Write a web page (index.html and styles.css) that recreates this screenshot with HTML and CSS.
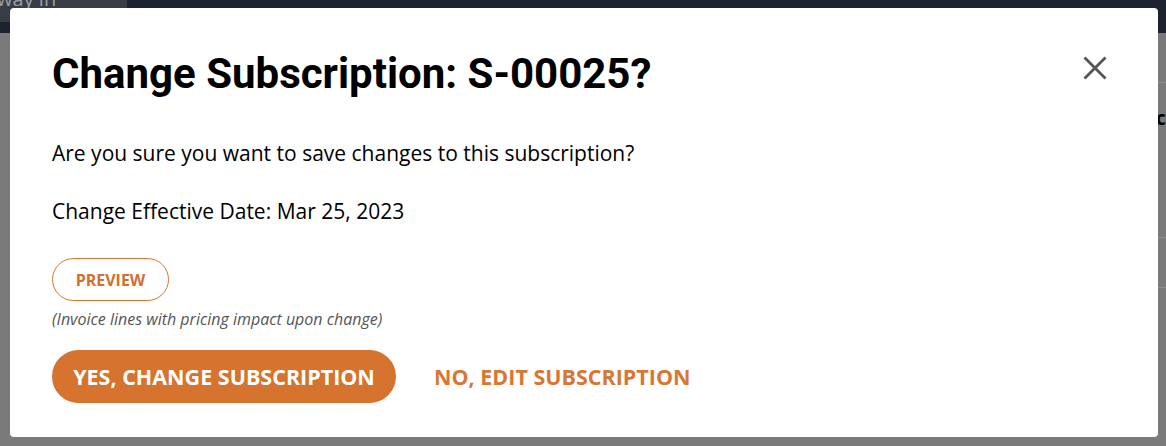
FILE: index.html
```html
<!DOCTYPE html>
<html lang="en">
<head>
<meta charset="utf-8">
<title>Change Subscription</title>
<link rel="stylesheet" href="styles.css">
</head>
<body>
<div class="page">
  <header class="topbar">
    <div class="tab"><span class="tab-text">Gateway in</span></div>
  </header>
  <div class="content">
    <div class="row-line first"></div>
    <div class="row-text">cost</div>
    <div class="row-line second"></div>
    <div class="row-line third"></div>
  </div>
</div>

<div class="modal" role="dialog" aria-labelledby="modal-title">
  <div class="modal-head">
    <h1 id="modal-title" class="modal-title">Change Subscription: S-00025?</h1>
    <button class="close-btn" aria-label="Close">
      <svg width="24" height="24" viewBox="0 0 24 24" aria-hidden="true">
        <path d="M1.5 1.5 L22.5 22.5 M22.5 1.5 L1.5 22.5" stroke="#555" stroke-width="2.8" stroke-linecap="butt" fill="none"/>
      </svg>
    </button>
  </div>
  <p class="modal-text q">Are you sure you want to save changes to this subscription?</p>
  <p class="modal-text date">Change Effective Date: Mar 25, 2023</p>
  <button class="btn-outline">PREVIEW</button>
  <p class="caption">(Invoice lines with pricing impact upon change)</p>
  <div class="actions">
    <button class="btn-primary">YES, CHANGE SUBSCRIPTION</button>
    <button class="btn-link">NO, EDIT SUBSCRIPTION</button>
  </div>
</div>
</body>
</html>
```
FILE: styles.css
```css
* { box-sizing: border-box; }
html, body { margin: 0; padding: 0; }
body {
  width: 1166px;
  height: 446px;
  overflow: hidden;
  background: #7a7a7a;
  font-family: "Open Sans", "Noto Sans", sans-serif;
  position: relative;
}
.page { width: 100%; height: 100%; overflow: hidden; }
.topbar {
  height: 33px;
  background: #1d2230;
  display: flex;
  align-items: flex-start;
}
.tab {
  width: 127px;
  height: 22px;
  background: #383c44;
  overflow: hidden;
  display: flex;
  align-items: flex-end;
}
.tab-text {
  color: #9a9ea6;
  font-size: 20px;
  line-height: 20px;
  margin-left: -47px;
  margin-bottom: 13px;
  white-space: nowrap;
}
.content { height: 413px; overflow: hidden; }
.row-line { height: 1px; background: #8c8c8c; margin-left: 1158px; }
.row-line.first { margin-top: 49px; }
.row-text {
  margin-top: 24px;
  margin-left: 1156px;
  font-size: 19px;
  font-weight: 700;
  line-height: 22px;
  color: #000;
  white-space: nowrap;
}
.row-line.second { margin-top: 108px; }
.row-line.third { margin-top: 49px; }

.modal {
  position: absolute;
  left: 10px;
  top: 8px;
  width: 1148px;
  height: 429px;
  background: #fff;
  border-radius: 4px;
  padding: 42px 42px 0 42px;
  display: flex;
  flex-direction: column;
  align-items: flex-start;
}
.modal-head {
  width: 100%;
  display: flex;
  justify-content: space-between;
  align-items: flex-start;
}
.modal-title {
  margin: 0;
  font-family: Roboto, "Liberation Sans", sans-serif;
  font-weight: 700;
  font-size: 42px;
  line-height: 48px;
  color: #000;
}
.close-btn {
  border: 0;
  background: none;
  padding: 0;
  margin: 6px 9px 0 0;
  width: 24px;
  height: 24px;
  cursor: pointer;
}
.close-btn svg { display: block; }
.modal-text {
  margin: 0;
  font-size: 21px;
  line-height: 28px;
  color: #000;
}
.modal-text.q { margin-top: 41px; }
.modal-text.date { margin-top: 30px; }
.btn-outline {
  margin-top: 33px;
  width: 117px;
  height: 43px;
  border: 1px solid #d87533;
  border-radius: 22px;
  background: #fff;
  color: #d2702f;
  font-family: "Open Sans", "Noto Sans", sans-serif;
  font-weight: 700;
  font-size: 16px;
  padding: 0;
}
.caption {
  margin: 7px 0 0 0;
  font-size: 16px;
  line-height: 22px;
  font-style: italic;
  color: #555;
}
.actions {
  margin-top: 20px;
  display: flex;
  align-items: center;
  gap: 38px;
}
.btn-primary {
  width: 344px;
  height: 53px;
  border: 0;
  border-radius: 27px;
  background: #d5732f;
  color: #fff;
  font-family: "Open Sans", "Noto Sans", sans-serif;
  font-weight: 700;
  font-size: 21.5px;
  padding: 0;
}
.btn-link {
  border: 0;
  background: none;
  padding: 0;
  color: #d87634;
  font-family: "Open Sans", "Noto Sans", sans-serif;
  font-weight: 700;
  font-size: 21.5px;
}
```
